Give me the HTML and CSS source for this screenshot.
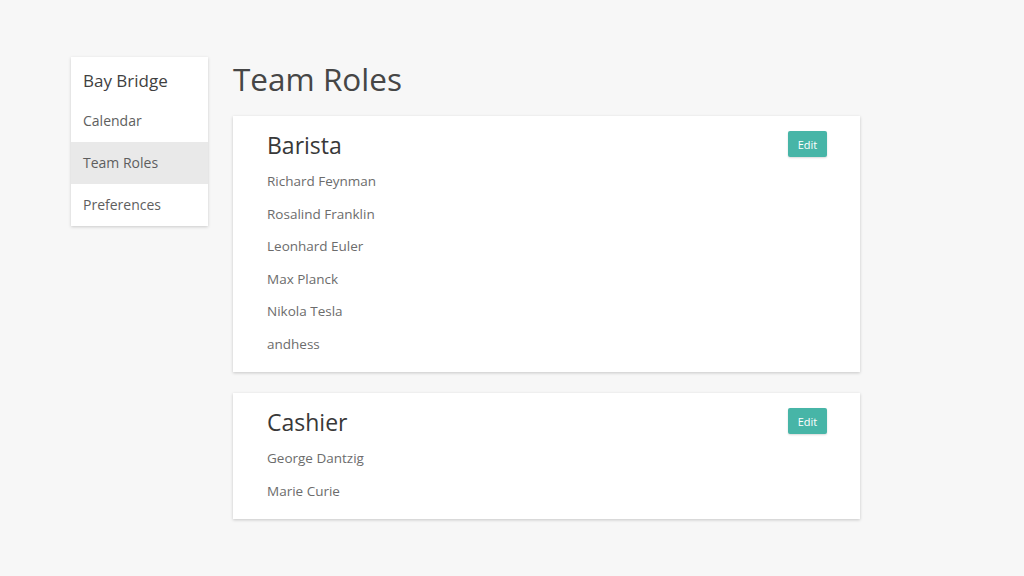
FILE: index.html
```html
<!DOCTYPE html>
<html>
<head>
<meta charset="utf-8">
<link rel="stylesheet" href="styles.css">
</head>
<body>
<div class="layout">
  <nav class="sidebar">
    <div class="brand">Bay Bridge</div>
    <div class="nav-item">Calendar</div>
    <div class="nav-item active">Team Roles</div>
    <div class="nav-item">Preferences</div>
  </nav>
  <main class="main">
    <h1 class="title">Team Roles</h1>
    <section class="card">
      <div class="card-head">
        <h2 class="role">Barista</h2>
        <button class="edit">Edit</button>
      </div>
      <ul class="names">
        <li>Richard Feynman</li>
        <li>Rosalind Franklin</li>
        <li>Leonhard Euler</li>
        <li>Max Planck</li>
        <li>Nikola Tesla</li>
        <li>andhess</li>
      </ul>
    </section>
    <section class="card">
      <div class="card-head">
        <h2 class="role">Cashier</h2>
        <button class="edit">Edit</button>
      </div>
      <ul class="names">
        <li>George Dantzig</li>
        <li>Marie Curie</li>
      </ul>
    </section>
  </main>
</div>
</body>
</html>
```
FILE: styles.css
```css
* { box-sizing: border-box; }
html, body { margin: 0; padding: 0; }
body {
  background: #f7f7f7;
  font-family: "Open Sans", "Noto Sans", sans-serif;
  color: #444;
}
.layout {
  display: flex;
  align-items: flex-start;
  padding: 57px 0 0 71px;
  gap: 25px;
}
.sidebar {
  width: 137px;
  background: #fff;
  box-shadow: 0 1px 3px rgba(0,0,0,0.18);
}
.brand {
  height: 43px;
  line-height: 48px;
  padding-left: 12px;
  font-size: 17px;
  color: #3f3f3f;
}
.nav-item {
  height: 42px;
  line-height: 41px;
  padding-left: 12px;
  font-size: 14px;
  color: #5e5e5e;
}
.nav-item.active { background: #e9e9e9; }
.main { width: 627px; }
.title {
  margin: 0 0 15px;
  font-size: 31.5px;
  font-weight: 400;
  line-height: 44px;
  color: #464646;
}
.card {
  background: #fff;
  box-shadow: 0 1px 3px rgba(0,0,0,0.2);
  padding: 14px 33px 12px 34px;
  margin-bottom: 21px;
}
.card-head {
  display: flex;
  justify-content: space-between;
  align-items: flex-start;
}
.role {
  margin: 0;
  font-size: 23px;
  font-weight: 400;
  line-height: 30px;
  color: #383838;
}
.edit {
  margin-top: 1px;
  width: 39px;
  height: 26px;
  border: none;
  border-radius: 2px;
  background: #47b5a7;
  color: #fff;
  font-family: inherit;
  font-size: 11px;
  padding: 0;
  box-shadow: 0 1px 2px rgba(0,0,0,0.15);
}
.names {
  list-style: none;
  margin: 5px 0 0;
  padding: 0;
}
.names li {
  line-height: 32.5px;
  font-size: 13.5px;
  color: #6c6c6c;
}
```
